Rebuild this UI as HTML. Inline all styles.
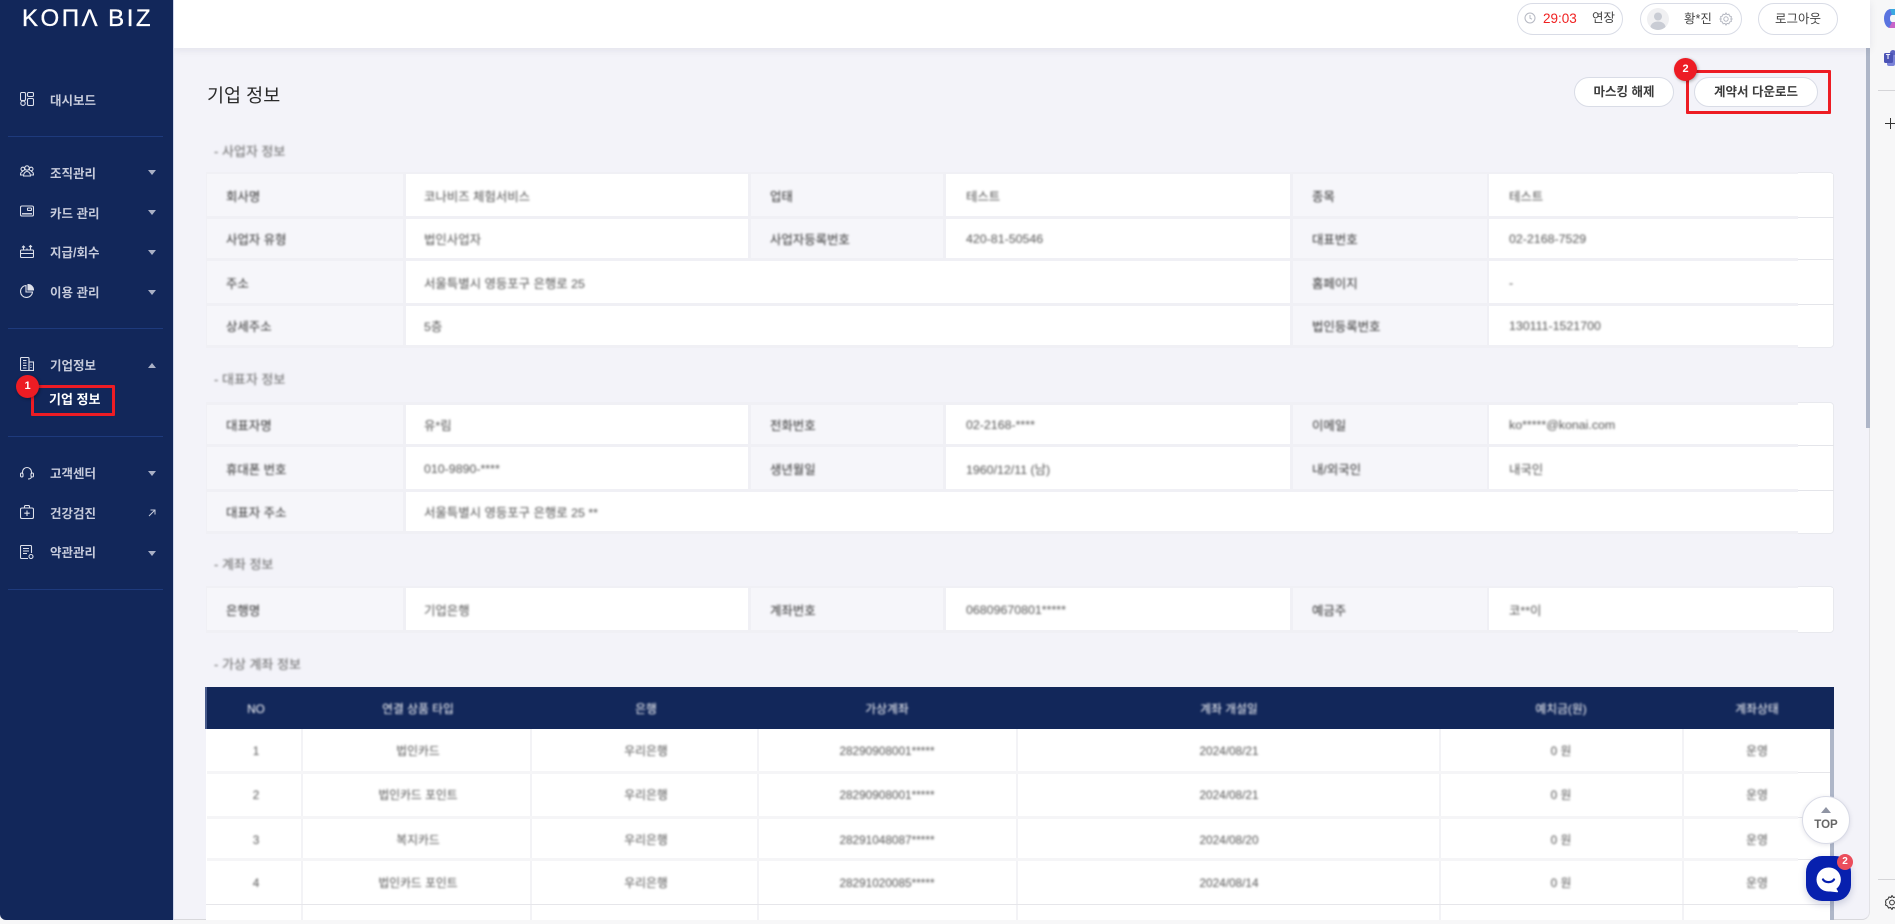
<!DOCTYPE html>
<html lang="ko">
<head>
<meta charset="utf-8">
<title>기업 정보</title>
<style>
*{box-sizing:border-box;margin:0;padding:0}
html,body{width:1895px;height:924px;overflow:hidden;background:#f7f7f8}
body{position:relative;font-family:"Liberation Sans","Noto Sans CJK KR",sans-serif;color:#333}
.a{position:absolute}
#main{left:173px;top:0;width:1697px;height:920px;background:#f3f3f9;border-bottom:1px solid #d8d8dc;border-right:1px solid #e2e2e6;border-bottom-right-radius:8px;overflow:hidden}
#side{left:0;top:0;width:174px;height:920px;background:#12275a;border-right:1px solid #cfd6ea;border-bottom-left-radius:6px}
#head{left:174px;top:0;width:1696px;height:48px;background:#fff;box-shadow:0 2px 8px rgba(30,30,60,.08)}
.logo{left:22px;top:4px;font-size:24px;line-height:30px;color:#fff;letter-spacing:2.55px;white-space:nowrap;-webkit-text-stroke:.35px #fff}
.line{left:8px;width:155px;height:1px;background:#1e3a7c}
.m{left:50px;font-size:12.5px;line-height:18px;font-weight:700;color:#c6cbdb;white-space:nowrap}
.ic{left:20px;width:14px;height:14px;fill:none;stroke:#dde0ea;stroke-width:1.1}
.ca{left:148px;width:0;height:0;border-left:4px solid transparent;border-right:4px solid transparent;border-top:5px solid #aab1c6}
.ca.up{border-top:0;border-bottom:5px solid #aab1c6}
.red{border:3px solid #ed1c24;border-radius:1px}
.bd{width:23px;height:23px;border-radius:50%;background:#ed1c24;color:#fff;font-size:11px;font-weight:700;line-height:23px;text-align:center;box-shadow:1px 1px 3px rgba(0,0,0,.35)}
.pill{background:#fff;border:1px solid #d9dce6;border-radius:17px;height:32px;top:3px;font-size:12.5px;color:#444;white-space:nowrap}
.btn{background:#fff;border:1px solid #d9dce6;border-radius:15px;height:30px;top:77px;font-size:12.5px;font-weight:700;line-height:28px;text-align:center;color:#3c3c3c;white-space:nowrap}
.h1{left:207px;top:82px;font-size:18.5px;line-height:28px;color:#2a2a2a;white-space:nowrap}
.sec{left:214px;font-size:13px;line-height:18px;color:#666;filter:blur(1px);white-space:nowrap}
.tb{left:206px;width:1628px;background:#fff;border:1px solid #e8e9ee;border-radius:4px}
.band{background:#f0f0f5;left:206px;width:1592px}
.c{position:absolute;display:flex;align-items:center;font-size:12.4px;white-space:nowrap;overflow:hidden;padding-top:1px}
.c span{filter:blur(.95px)}
.l{background:#f6f6fa;color:#333;padding-left:19px}
.v{background:#fff;color:#555;padding-left:18px}
.tl{left:1798px;width:36px;height:1px;background:#e4e5ea}
.th{left:205px;top:687px;width:1629px;height:42px;background:#12275a;border-left:2px solid #47598a}
.t{position:absolute;transform:translateX(-50%);font-size:11.8px;line-height:16px;color:#555;filter:blur(1px);white-space:nowrap}
.t.w{color:#fff}
.vl{width:2px;background:#f3f3f6}
.hl{left:207px;width:1591px;height:3px;background:#f5f5f7}
</style>
</head>
<body>

<div id="main" class="a"></div>

<!-- section headings -->
<div class="a h1">기업 정보</div>
<div class="a sec" style="top:143px">- 사업자 정보</div>
<div class="a sec" style="top:371px">- 대표자 정보</div>
<div class="a sec" style="top:556px">- 계좌 정보</div>
<div class="a sec" style="top:656px">- 가상 계좌 정보</div>

<!-- table 1 -->
<div class="a tb" style="top:172px;height:176px"></div>
<div class="a band" style="top:172px;height:176px"></div>
<div class="c l" style="left:207px;top:174px;width:196px;height:42px"><span>회사명</span></div>
<div class="c v" style="left:406px;top:174px;width:342px;height:42px"><span>코나비즈 체험서비스</span></div>
<div class="c l" style="left:751px;top:174px;width:192px;height:42px"><span>업태</span></div>
<div class="c v" style="left:946px;top:174px;width:344px;height:42px;padding-left:20px"><span>테스트</span></div>
<div class="c l" style="left:1293px;top:174px;width:194px;height:42px"><span>종목</span></div>
<div class="c v" style="left:1489px;top:174px;width:344px;height:42px;padding-left:20px"><span>테스트</span></div>

<div class="c l" style="left:207px;top:219px;width:196px;height:39px"><span>사업자 유형</span></div>
<div class="c v" style="left:406px;top:219px;width:342px;height:39px"><span>법인사업자</span></div>
<div class="c l" style="left:751px;top:219px;width:192px;height:39px"><span>사업자등록번호</span></div>
<div class="c v" style="left:946px;top:219px;width:344px;height:39px;padding-left:20px"><span>420-81-50546</span></div>
<div class="c l" style="left:1293px;top:219px;width:194px;height:39px"><span>대표번호</span></div>
<div class="c v" style="left:1489px;top:219px;width:344px;height:39px;padding-left:20px"><span>02-2168-7529</span></div>

<div class="c l" style="left:207px;top:261px;width:196px;height:42px"><span>주소</span></div>
<div class="c v" style="left:406px;top:261px;width:884px;height:42px"><span>서울특별시 영등포구 은행로 25</span></div>
<div class="c l" style="left:1293px;top:261px;width:194px;height:42px"><span>홈페이지</span></div>
<div class="c v" style="left:1489px;top:261px;width:344px;height:42px;padding-left:20px"><span>-</span></div>

<div class="c l" style="left:207px;top:306px;width:196px;height:39px"><span>상세주소</span></div>
<div class="c v" style="left:406px;top:306px;width:884px;height:39px"><span>5층</span></div>
<div class="c l" style="left:1293px;top:306px;width:194px;height:39px"><span>법인등록번호</span></div>
<div class="c v" style="left:1489px;top:306px;width:344px;height:39px;padding-left:20px"><span>130111-1521700</span></div>
<div class="a tl" style="top:217px"></div>
<div class="a tl" style="top:259px"></div>
<div class="a tl" style="top:304px"></div>

<!-- table 2 -->
<div class="a tb" style="top:402px;height:132px"></div>
<div class="a band" style="top:402px;height:132px"></div>
<div class="c l" style="left:207px;top:405px;width:196px;height:39px"><span>대표자명</span></div>
<div class="c v" style="left:406px;top:405px;width:342px;height:39px"><span>유*림</span></div>
<div class="c l" style="left:751px;top:405px;width:192px;height:39px"><span>전화번호</span></div>
<div class="c v" style="left:946px;top:405px;width:344px;height:39px;padding-left:20px"><span>02-2168-****</span></div>
<div class="c l" style="left:1293px;top:405px;width:194px;height:39px"><span>이메일</span></div>
<div class="c v" style="left:1489px;top:405px;width:344px;height:39px;padding-left:20px"><span>ko*****@konai.com</span></div>

<div class="c l" style="left:207px;top:447px;width:196px;height:42px"><span>휴대폰 번호</span></div>
<div class="c v" style="left:406px;top:447px;width:342px;height:42px"><span>010-9890-****</span></div>
<div class="c l" style="left:751px;top:447px;width:192px;height:42px"><span>생년월일</span></div>
<div class="c v" style="left:946px;top:447px;width:344px;height:42px;padding-left:20px"><span>1960/12/11 (남)</span></div>
<div class="c l" style="left:1293px;top:447px;width:194px;height:42px"><span>내/외국인</span></div>
<div class="c v" style="left:1489px;top:447px;width:344px;height:42px;padding-left:20px"><span>내국인</span></div>

<div class="c l" style="left:207px;top:492px;width:196px;height:39px"><span>대표자 주소</span></div>
<div class="c v" style="left:406px;top:492px;width:1427px;height:39px"><span>서울특별시 영등포구 은행로 25 **</span></div>
<div class="a tl" style="top:445px"></div>
<div class="a tl" style="top:490px"></div>

<!-- table 3 -->
<div class="a tb" style="top:586px;height:47px"></div>
<div class="a band" style="top:586px;height:47px"></div>
<div class="c l" style="left:207px;top:588px;width:196px;height:42px"><span>은행명</span></div>
<div class="c v" style="left:406px;top:588px;width:342px;height:42px"><span>기업은행</span></div>
<div class="c l" style="left:751px;top:588px;width:192px;height:42px"><span>계좌번호</span></div>
<div class="c v" style="left:946px;top:588px;width:344px;height:42px;padding-left:20px"><span>06809670801*****</span></div>
<div class="c l" style="left:1293px;top:588px;width:194px;height:42px"><span>예금주</span></div>
<div class="c v" style="left:1489px;top:588px;width:344px;height:42px;padding-left:20px"><span>코**이</span></div>

<!-- table 4 -->
<div class="a" style="left:206px;top:729px;width:1628px;height:191px;background:#fff"></div>
<div class="a th"></div>
<div class="a vl" style="left:301px;top:729px;height:191px"></div>
<div class="a vl" style="left:530px;top:729px;height:191px"></div>
<div class="a vl" style="left:757px;top:729px;height:191px"></div>
<div class="a vl" style="left:1016px;top:729px;height:191px"></div>
<div class="a vl" style="left:1439px;top:729px;height:191px"></div>
<div class="a vl" style="left:1682px;top:729px;height:191px"></div>
<div class="a hl" style="top:771px"></div>
<div class="a hl" style="top:816px"></div>
<div class="a hl" style="top:858px"></div>
<div class="a" style="left:206px;top:904px;width:1624px;height:1px;background:#e6e6ea"></div>
<div class="a" style="left:1798px;top:772px;width:32px;height:1px;background:#e6e6ea"></div>
<div class="a" style="left:1798px;top:817px;width:32px;height:1px;background:#e6e6ea"></div>
<div class="a" style="left:1798px;top:859px;width:32px;height:1px;background:#e6e6ea"></div>
<div class="a" style="left:1830px;top:729px;width:4px;height:191px;background:#aeb6c8"></div>

<div class="t w" style="left:256px;top:701px">NO</div>
<div class="t w" style="left:418px;top:701px">연결 상품 타입</div>
<div class="t w" style="left:646px;top:701px">은행</div>
<div class="t w" style="left:887px;top:701px">가상계좌</div>
<div class="t w" style="left:1229px;top:701px">계좌 개설일</div>
<div class="t w" style="left:1561px;top:701px">예치금(원)</div>
<div class="t w" style="left:1757px;top:701px">계좌상태</div>

<div class="t" style="left:256px;top:743px">1</div>
<div class="t" style="left:418px;top:743px">법인카드</div>
<div class="t" style="left:646px;top:743px">우리은행</div>
<div class="t" style="left:887px;top:743px">28290908001*****</div>
<div class="t" style="left:1229px;top:743px">2024/08/21</div>
<div class="t" style="left:1561px;top:743px">0 원</div>
<div class="t" style="left:1757px;top:743px">운영</div>

<div class="t" style="left:256px;top:787px">2</div>
<div class="t" style="left:418px;top:787px">법인카드 포인트</div>
<div class="t" style="left:646px;top:787px">우리은행</div>
<div class="t" style="left:887px;top:787px">28290908001*****</div>
<div class="t" style="left:1229px;top:787px">2024/08/21</div>
<div class="t" style="left:1561px;top:787px">0 원</div>
<div class="t" style="left:1757px;top:787px">운영</div>

<div class="t" style="left:256px;top:832px">3</div>
<div class="t" style="left:418px;top:832px">복지카드</div>
<div class="t" style="left:646px;top:832px">우리은행</div>
<div class="t" style="left:887px;top:832px">28291048087*****</div>
<div class="t" style="left:1229px;top:832px">2024/08/20</div>
<div class="t" style="left:1561px;top:832px">0 원</div>
<div class="t" style="left:1757px;top:832px">운영</div>

<div class="t" style="left:256px;top:875px">4</div>
<div class="t" style="left:418px;top:875px">법인카드 포인트</div>
<div class="t" style="left:646px;top:875px">우리은행</div>
<div class="t" style="left:887px;top:875px">28291020085*****</div>
<div class="t" style="left:1229px;top:875px">2024/08/14</div>
<div class="t" style="left:1561px;top:875px">0 원</div>
<div class="t" style="left:1757px;top:875px">운영</div>

<!-- page scrollbar -->
<div class="a" style="left:1866px;top:48px;width:4px;height:380px;background:#aeb6c8"></div>

<!-- header -->
<div id="head" class="a"></div>
<div class="a pill" style="left:1517px;width:106px"></div>
<svg class="a" style="left:1524px;top:12px" width="12" height="12" viewBox="0 0 12 12" fill="none" stroke="#b5b8c2"><circle cx="6" cy="6" r="5"/><path d="M6 3v3.2l2 1"/></svg>
<div class="a" style="left:1543px;top:9px;font-size:13.5px;line-height:20px;color:#f02020;white-space:nowrap">29:03</div>
<div class="a" style="left:1592px;top:8px;font-size:12.5px;line-height:20px;color:#444;white-space:nowrap">연장</div>
<div class="a pill" style="left:1640px;width:102px"></div>
<svg class="a" style="left:1647px;top:8px" width="22" height="22" viewBox="0 0 22 22"><defs><clipPath id="av"><circle cx="11" cy="11" r="11"/></clipPath></defs><circle cx="11" cy="11" r="11" fill="#f0f0f2"/><g clip-path="url(#av)" fill="#c9ccd4"><circle cx="11" cy="8.5" r="4"/><ellipse cx="11" cy="19" rx="7.5" ry="5.5"/></g></svg>
<div class="a" style="left:1684px;top:9px;font-size:12.5px;line-height:20px;color:#444;white-space:nowrap">황*진</div>
<svg class="a" style="left:1719px;top:12px" width="14" height="14" viewBox="0 0 14 14" fill="none" stroke="#b5b8c2"><circle cx="7" cy="7" r="2.2"/><path d="M7 1l1 1.6 1.9-.4.7 1.8 1.8.7-.4 1.9L13 7l-1 .4.4 1.9-1.8.7-.7 1.8-1.9-.4L7 13l-1-1.6-1.9.4-.7-1.8-1.8-.7.4-1.9L1 7l1-.4-.4-1.9 1.8-.7.7-1.8 1.9.4z"/></svg>
<div class="a pill" style="left:1758px;width:80px;line-height:30px;text-align:center">로그아웃</div>

<div class="a btn" style="left:1574px;width:100px">마스킹 해제</div>
<div class="a btn" style="left:1694px;width:124px">계약서 다운로드</div>
<div class="a red" style="left:1686px;top:70px;width:145px;height:44px"></div>
<div class="a bd" style="left:1674px;top:58px">2</div>

<!-- sidebar -->
<div id="side" class="a">
  <div class="a logo">KOΠΛ BIZ</div>

  <svg class="a ic" style="top:92px" viewBox="0 0 14 14"><rect x=".5" y=".5" width="5" height="8" rx="1.2"/><circle cx="3" cy="11.2" r="2.2"/><rect x="7.5" y=".5" width="6" height="4" rx="1.2"/><rect x="7.5" y="6.5" width="6" height="7" rx="1.2"/></svg>
  <div class="a m" style="top:92px">대시보드</div>
  <div class="a line" style="top:136px"></div>

  <svg class="a ic" style="top:164px" viewBox="0 0 14 14"><circle cx="7" cy="4" r="2.2"/><circle cx="2.8" cy="5" r="1.8"/><circle cx="11.2" cy="5" r="1.8"/><path d="M3.5 12c0-2.5 1.5-4.5 3.5-4.5s3.500 2 3.500 4.500zM3 7.500C1.500 7.500.5 9 .5 11H3M11 7.500c1.500 0 2.500 1.500 2.500 3.500H11"/></svg>
  <div class="a m" style="top:165px">조직관리</div>
  <div class="a ca" style="top:170px"></div>

  <svg class="a ic" style="top:204px" viewBox="0 0 14 14"><rect x=".5" y="2" width="13" height="10" rx="1.5"/><rect x="7.500" y="4" width="4" height="2.500" rx=".5"/><path d="M2 9.800h10" stroke-width="1.400"/></svg>
  <div class="a m" style="top:205px">카드 관리</div>
  <div class="a ca" style="top:210px"></div>

  <svg class="a ic" style="top:244px" viewBox="0 0 14 14"><rect x=".5" y="6" width="13" height="7.500" rx="1"/><path d="M3.500 6V3M10.500 6V1.500M9 3l1.500-1.500L12 3M2 3.500L3.500 2 5 3.500M.5 9.500h13M7 4.500v1"/></svg>
  <div class="a m" style="top:244px">지급/회수</div>
  <div class="a ca" style="top:250px"></div>

  <svg class="a ic" style="top:284px" viewBox="0 0 14 14"><path d="M6 1.500a6 6 0 1 0 6.500 6.500H6z"/><path d="M8 .5a5.500 5.500 0 0 1 5.500 5.500H8z" fill="#dde0ea"/></svg>
  <div class="a m" style="top:284px">이용 관리</div>
  <div class="a ca" style="top:290px"></div>

  <div class="a line" style="top:328px"></div>

  <svg class="a ic" style="top:357px" viewBox="0 0 14 14"><rect x=".5" y=".5" width="8.500" height="13" rx="1"/><rect x="9" y="5" width="4.500" height="8.500"/><path d="M3 3.500h3.500M3 6h3.500M3 8.500h3.500M3 11h3.500M11 7.500v1M11 10v1"/></svg>
  <div class="a m" style="top:357px">기업정보</div>
  <div class="a ca up" style="top:363px"></div>

  <div class="a m" style="top:391px;left:49px;color:#fff;font-size:13px">기업 정보</div>
  <div class="a red" style="left:31px;top:385px;width:84px;height:31px"></div>
  <div class="a bd" style="left:16px;top:375px">1</div>

  <div class="a line" style="top:436px"></div>

  <svg class="a ic" style="top:466px" viewBox="0 0 14 14"><path d="M2.500 8V6a4.500 4.500 0 0 1 9 0v2M11.500 10.500c0 1.500-1.500 2.500-3.500 2.500"/><rect x=".5" y="7" width="2.500" height="4" rx="1.200"/><rect x="11" y="7" width="2.500" height="4" rx="1.200"/></svg>
  <div class="a m" style="top:465px">고객센터</div>
  <div class="a ca" style="top:471px"></div>

  <svg class="a ic" style="top:505px" viewBox="0 0 14 14"><rect x=".5" y="3" width="13" height="10.500" rx="1.500"/><path d="M4.500 3V1.500a1 1 0 0 1 1-1h3a1 1 0 0 1 1 1V3M7 5.500v5.500M4.300 8.200h5.400"/></svg>
  <div class="a m" style="top:505px">건강검진</div>
  <svg class="a" style="left:148px;top:509px" width="8" height="8" viewBox="0 0 8 8" fill="none" stroke="#c6cbdb" stroke-width="1"><path d="M1 7L7 1M2.500 1H7v4.500"/></svg>

  <svg class="a ic" style="top:545px" viewBox="0 0 14 14"><path d="M8 13.500H1.500a1 1 0 0 1-1-1V1.500a1 1 0 0 1 1-1h9a1 1 0 0 1 1 1V8"/><path d="M3 3.500h6M3 6h6M3 8.500h4"/><circle cx="11" cy="11.500" r="2"/></svg>
  <div class="a m" style="top:544px">약관관리</div>
  <div class="a ca" style="top:551px"></div>

  <div class="a line" style="top:589px"></div>
</div>

<!-- floating -->
<div class="a" style="left:1802px;top:796px;width:48px;height:48px;border-radius:50%;background:#fff;border:1px solid #d9dbe6;box-shadow:0 1px 5px rgba(40,40,80,.12)"></div>
<div class="a" style="left:1821px;top:807px;width:0;height:0;border-left:5px solid transparent;border-right:5px solid transparent;border-top:0;border-bottom:6px solid #8f94a3"></div>
<div class="a" style="left:1802px;top:817px;width:48px;text-align:center;font-size:11.500px;line-height:16px;font-weight:700;color:#666">TOP</div>

<div class="a" style="left:1806px;top:856px;width:45px;height:45px;border-radius:16px;background:#0720ae;box-shadow:0 3px 8px rgba(20,30,100,.2)"></div>
<svg class="a" style="left:1815px;top:866px" width="27" height="27" viewBox="0 0 27 27"><path d="M13.500 1.500a12 12 0 1 0 0 24c1.800 0 6 .5 8.500 .8 1 .1 1.300-.6.800-1.300l-1.400-2.200A12 12 0 0 0 13.500 1.500z" fill="#fff"/><path d="M8 13.500c2.500 3.500 8.500 3.500 11 0" fill="none" stroke="#0720ae" stroke-width="2.300" stroke-linecap="round"/></svg>
<div class="a" style="left:1837px;top:854px;width:16px;height:16px;border-radius:50%;background:#eb4d5c;color:#fff;font-size:10px;font-weight:700;line-height:16px;text-align:center">2</div>

<!-- right rail -->
<svg class="a" style="left:1884px;top:9px" width="11" height="19" viewBox="0 0 11 19"><path d="M11 0H7C3 0 0 4 0 9.500S3 19 6 19h5V13H8C6.500 13 6 11 6 9.500S6.500 6 8 6h3z" fill="#5a74e0"/><path d="M5 19c2 0 6 0 6 0v-6H8z" fill="#c764c8"/><path d="M6 0h5v6H8z" fill="#3aa8e0"/></svg>
<svg class="a" style="left:1884px;top:50px" width="11" height="17" viewBox="0 0 11 17"><circle cx="9" cy="3" r="3" fill="#5b62c0"/><rect x="3" y="5" width="8" height="11" rx="2" fill="#7b83d8"/><rect x="0" y="3" width="9" height="10" rx="1.500" fill="#4b53b5"/></svg>
<div class="a" style="left:1884px;top:53px;width:8px;text-align:center;font-size:7px;font-weight:700;line-height:10px;color:#fff">T</div>
<div class="a" style="left:1878px;top:90px;width:17px;height:1px;background:#d5d5d8"></div>
<div class="a" style="left:1885px;top:123px;width:10px;height:1px;background:#333"></div>
<div class="a" style="left:1890px;top:118px;width:1px;height:11px;background:#333"></div>
<div class="a" style="left:1878px;top:879px;width:17px;height:1px;background:#d5d5d8"></div>
<svg class="a" style="left:1884px;top:895px" width="11" height="15" viewBox="0 0 11 15" fill="none" stroke="#333"><circle cx="8" cy="7.500" r="2.400"/><path d="M8 .5l1.500 2 2 -.5 1 2 2 1-.5 2 .5 1-.5 2-2 1-1 2-2-.5L8 14.500l-1.500-2-2 .5-1-2-2-1 .5-2-.5-1 .5-2 2-1 1-2 2 .5z"/></svg>

</body>
</html>
